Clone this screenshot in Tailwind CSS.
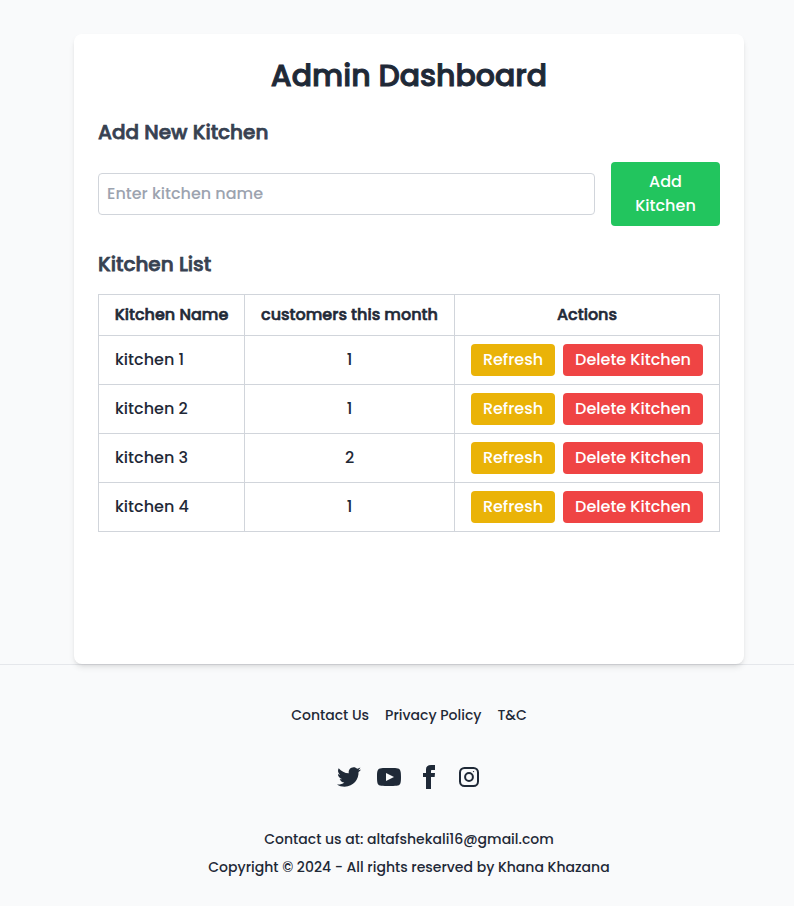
<!DOCTYPE html>
<html lang="en">
<head>
<meta charset="utf-8">
<meta name="viewport" content="width=device-width, initial-scale=1">
<title>Admin Dashboard</title>
<script src="https://cdn.jsdelivr.net/npm/@tailwindcss/browser@4"></script>
</head>
<body class="h-[906px] overflow-hidden bg-[#f9fafb] font-['Poppins','Inter',sans-serif] text-base font-medium text-[#1f2937]">
<main class="flex h-[664px] pt-[34px] pl-[74px]">
  <section class="relative z-10 h-[630px] w-[670px] rounded-lg bg-white p-6 shadow-md">
    <h1 class="mb-6 text-center text-3xl font-medium whitespace-nowrap [-webkit-text-stroke:1px_currentColor]">Admin Dashboard</h1>
    <h2 class="mb-4 text-xl font-medium text-[#374151] [-webkit-text-stroke:0.75px_currentColor]">Add New Kitchen</h2>
    <form class="mb-6 flex items-center gap-4">
      <input type="text" placeholder="Enter kitchen name" class="w-[497px] rounded-sm border border-[#d1d5db] p-2 leading-6 placeholder:text-[#9ca3af]">
      <button type="button" class="w-[109px] rounded-sm bg-[#22c55e] px-6 py-2 text-center text-white">Add Kitchen</button>
    </form>
    <h2 class="mb-4 text-xl font-medium text-[#374151] [-webkit-text-stroke:0.75px_currentColor]">Kitchen List</h2>
    <table class="w-[622px] table-fixed border-collapse whitespace-nowrap">
      <colgroup><col class="w-[146px]"><col class="w-[210px]"><col></colgroup>
      <thead>
        <tr class="h-[41px] [-webkit-text-stroke:0.6px_currentColor]">
          <th class="border border-[#d1d5db] font-medium">Kitchen Name</th>
          <th class="border border-[#d1d5db] font-medium">customers this month</th>
          <th class="border border-[#d1d5db] font-medium">Actions</th>
        </tr>
      </thead>
      <tbody>
        <tr class="h-[49px]">
          <td class="border border-[#d1d5db] px-4">kitchen 1</td>
          <td class="border border-[#d1d5db] text-center">1</td>
          <td class="border border-[#d1d5db]"><div class="flex justify-center gap-2"><button class="h-8 w-[84px] rounded-sm bg-[#eab308] text-white">Refresh</button><button class="h-8 w-[140px] rounded-sm bg-[#ef4444] text-white">Delete Kitchen</button></div></td>
        </tr>
        <tr class="h-[49px]">
          <td class="border border-[#d1d5db] px-4">kitchen 2</td>
          <td class="border border-[#d1d5db] text-center">1</td>
          <td class="border border-[#d1d5db]"><div class="flex justify-center gap-2"><button class="h-8 w-[84px] rounded-sm bg-[#eab308] text-white">Refresh</button><button class="h-8 w-[140px] rounded-sm bg-[#ef4444] text-white">Delete Kitchen</button></div></td>
        </tr>
        <tr class="h-[49px]">
          <td class="border border-[#d1d5db] px-4">kitchen 3</td>
          <td class="border border-[#d1d5db] text-center">2</td>
          <td class="border border-[#d1d5db]"><div class="flex justify-center gap-2"><button class="h-8 w-[84px] rounded-sm bg-[#eab308] text-white">Refresh</button><button class="h-8 w-[140px] rounded-sm bg-[#ef4444] text-white">Delete Kitchen</button></div></td>
        </tr>
        <tr class="h-[49px]">
          <td class="border border-[#d1d5db] px-4">kitchen 4</td>
          <td class="border border-[#d1d5db] text-center">1</td>
          <td class="border border-[#d1d5db]"><div class="flex justify-center gap-2"><button class="h-8 w-[84px] rounded-sm bg-[#eab308] text-white">Refresh</button><button class="h-8 w-[140px] rounded-sm bg-[#ef4444] text-white">Delete Kitchen</button></div></td>
        </tr>
      </tbody>
    </table>
  </section>
</main>
<footer class="flex h-[242px] flex-col items-center border-t border-[#e5e7eb] pt-10 pl-6 text-sm whitespace-nowrap">
  <nav class="flex gap-4">
    <a>Contact Us</a>
    <a>Privacy Policy</a>
    <a>T&amp;C</a>
  </nav>
  <div class="mt-10 flex gap-4">
    <svg class="size-6" viewBox="0 0 24 24" fill="currentColor"><path d="M24 4.557c-.883.392-1.832.656-2.828.775 1.017-.609 1.798-1.574 2.165-2.724-.951.564-2.005.974-3.127 1.195-.897-.957-2.178-1.555-3.594-1.555-3.179 0-5.515 2.966-4.797 6.045-4.091-.205-7.719-2.165-10.148-5.144-1.29 2.213-.669 5.108 1.523 6.574-.806-.026-1.566-.247-2.229-.616-.054 2.281 1.581 4.415 3.949 4.89-.693.188-1.452.232-2.224.084.626 1.956 2.444 3.379 4.6 3.419-2.07 1.623-4.678 2.348-7.29 2.04 2.179 1.397 4.768 2.212 7.548 2.212 9.142 0 14.307-7.721 13.995-14.646.962-.695 1.797-1.562 2.457-2.549z"/></svg>
    <svg class="size-6" viewBox="0 0 24 24" fill="currentColor"><path d="M19.615 3.184c-3.604-.246-11.631-.245-15.23 0-3.897.266-4.356 2.62-4.385 8.816.029 6.185.484 8.549 4.385 8.816 3.6.245 11.626.246 15.23 0 3.897-.266 4.356-2.62 4.385-8.816-.029-6.185-.484-8.549-4.385-8.816zm-10.615 12.816v-8l8 3.993-8 4.007z"/></svg>
    <svg class="size-6" viewBox="0 0 24 24" fill="currentColor"><path d="M9 8h-3v4h3v12h5v-12h3.642l.358-4h-4v-1.667c0-.955.192-1.333 1.115-1.333h2.885v-5h-3.808c-3.596 0-5.192 1.583-5.192 4.615v3.385z"/></svg>
    <svg class="size-6" viewBox="0 0 24 24" fill="none" stroke="currentColor" stroke-width="2"><rect x="3" y="3" width="18" height="18" rx="4.5"/><circle cx="12" cy="12" r="3.9"/><circle cx="16.5" cy="6.6" r=".7" fill="currentColor" stroke="none"/></svg>
  </div>
  <p class="mt-10 leading-5">Contact us at: altafshekali16@gmail.com</p>
  <p class="mt-2 leading-5">Copyright © 2024 - All rights reserved by Khana Khazana</p>
</footer>
</body>
</html>
